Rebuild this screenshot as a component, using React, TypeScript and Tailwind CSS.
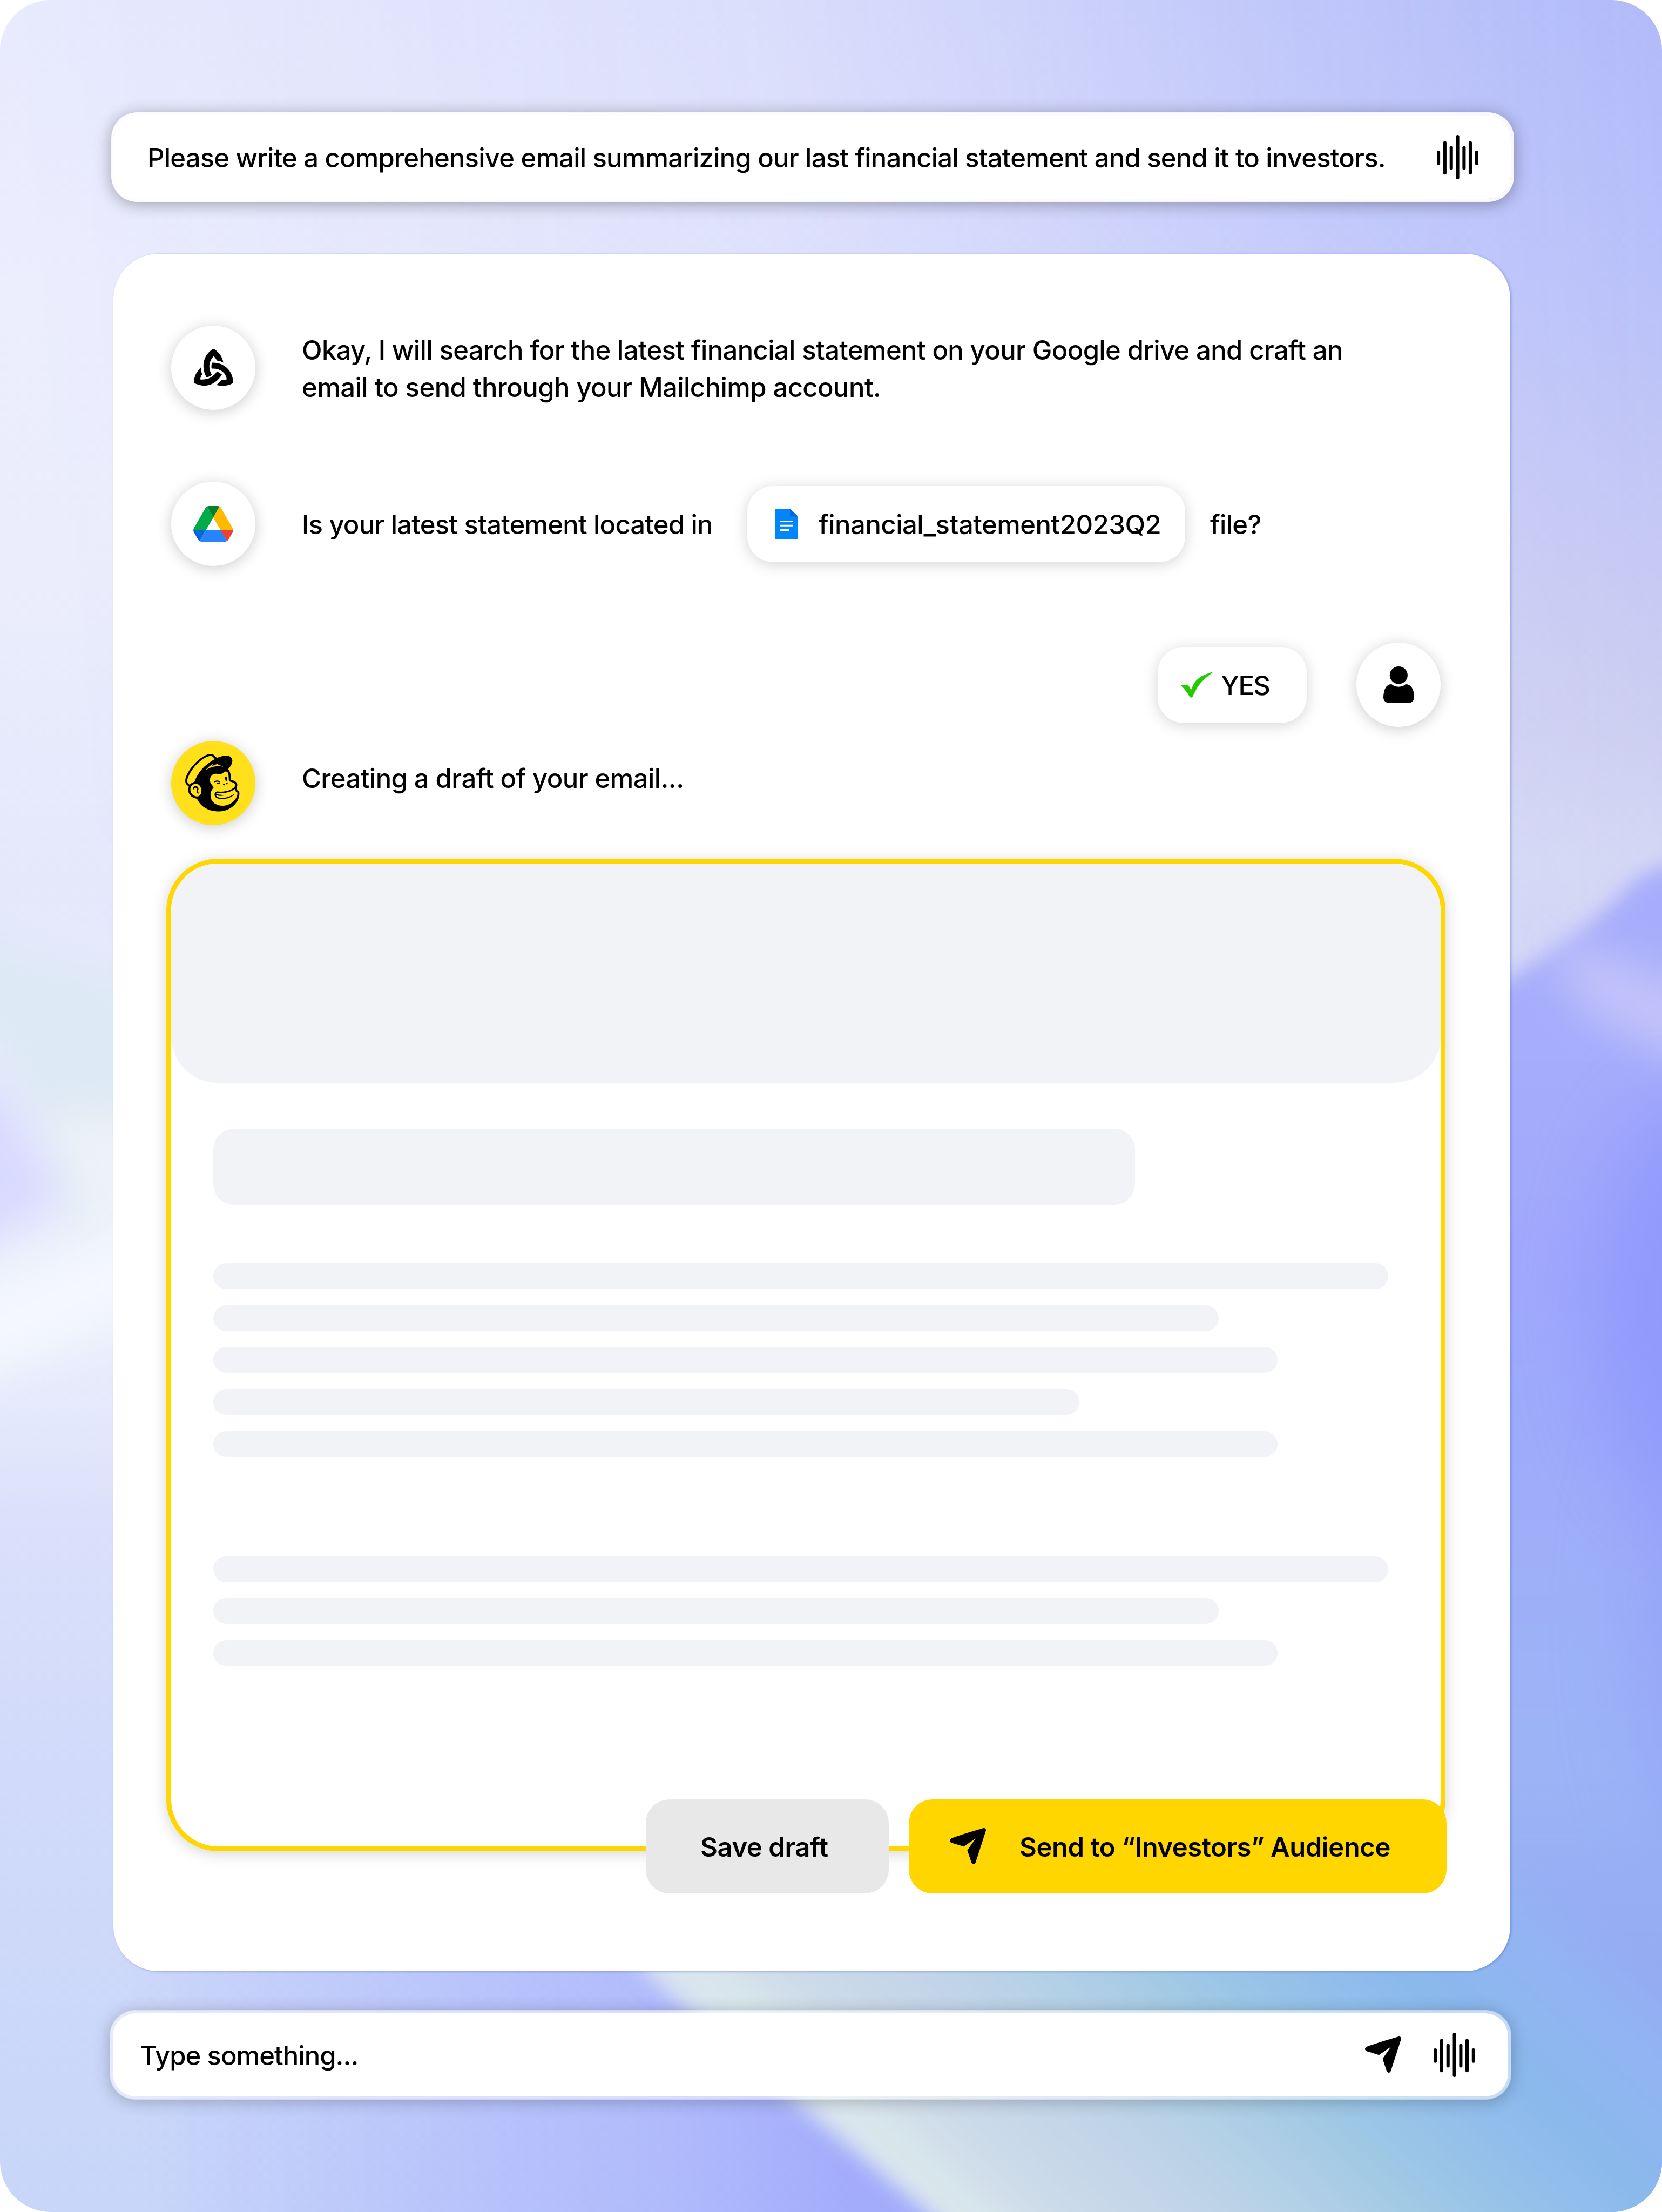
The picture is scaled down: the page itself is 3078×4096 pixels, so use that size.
import type { ReactNode } from "react";
import { SiMailchimp } from "react-icons/si";

function Backdrop() {
  return (
    <svg className="absolute inset-0 h-full w-full" viewBox="0 0 1178 1568" preserveAspectRatio="none" aria-hidden="true">
      <defs>
        <linearGradient id="leftTone" x1="0" y1="0" x2="0" y2="1">
          <stop offset="0" stopColor="#e8eafd" />
          <stop offset=".13" stopColor="#ecedfd" />
          <stop offset=".26" stopColor="#ebedfc" />
          <stop offset=".4" stopColor="#e4e8fb" />
          <stop offset=".6" stopColor="#ebeffc" />
          <stop offset=".69" stopColor="#dae0fb" />
          <stop offset=".8" stopColor="#d1dafa" />
          <stop offset="1" stopColor="#c8d6f9" />
        </linearGradient>
        <linearGradient id="rightTone" x1="0" y1="0" x2="0" y2="1">
          <stop offset="0" stopColor="#b1baf8" />
          <stop offset=".12" stopColor="#b7bffa" />
          <stop offset=".25" stopColor="#c3c7f3" />
          <stop offset=".33" stopColor="#cbcdf0" />
          <stop offset=".39" stopColor="#d2d6f4" />
          <stop offset="1" stopColor="#a5b0fb" />
        </linearGradient>
        <linearGradient id="blend" x1="0" y1="0" x2="1178" y2="-90" gradientUnits="userSpaceOnUse">
          <stop offset="0" stopColor="#fff" stopOpacity="0" />
          <stop offset=".25" stopColor="#fff" stopOpacity=".12" />
          <stop offset=".45" stopColor="#fff" stopOpacity=".24" />
          <stop offset=".6" stopColor="#fff" stopOpacity=".45" />
          <stop offset=".78" stopColor="#fff" stopOpacity=".75" />
          <stop offset="1" stopColor="#fff" stopOpacity="1" />
        </linearGradient>
        <mask id="blendMask" maskUnits="userSpaceOnUse" x="0" y="0" width="1178" height="1568">
          <rect width="1178" height="1568" fill="url(#blend)" />
        </mask>
        <linearGradient id="violet" x1="0" y1="600" x2="0" y2="1568" gradientUnits="userSpaceOnUse">
          <stop offset="0" stopColor="#a9adfc" />
          <stop offset=".1" stopColor="#a8aefb" />
          <stop offset=".3" stopColor="#a0a8fc" />
          <stop offset=".42" stopColor="#9eaafa" />
          <stop offset=".52" stopColor="#9eaff8" />
          <stop offset=".7" stopColor="#9cb5f6" />
          <stop offset="1" stopColor="#8fb3f0" />
        </linearGradient>
        <linearGradient id="peri" x1="90" y1="1440" x2="590" y2="1400" gradientUnits="userSpaceOnUse">
          <stop offset="0" stopColor="#a5aefc" stopOpacity="0" />
          <stop offset=".75" stopColor="#a8b2fd" stopOpacity=".72" />
          <stop offset="1" stopColor="#a3acfb" stopOpacity="1" />
        </linearGradient>
        <linearGradient id="wedge" x1="458" y1="1397" x2="787" y2="1038.3" gradientUnits="userSpaceOnUse">
          <stop offset="0" stopColor="#d6e1f1" />
          <stop offset=".05" stopColor="#dae7ec" />
          <stop offset=".14" stopColor="#cddbe9" />
          <stop offset=".28" stopColor="#c1d4e8" />
          <stop offset=".39" stopColor="#b3d0e6" />
          <stop offset=".51" stopColor="#a0c9e4" />
          <stop offset=".64" stopColor="#93bfea" />
          <stop offset=".75" stopColor="#8ab8ec" />
          <stop offset=".9" stopColor="#92b4f3" />
          <stop offset="1" stopColor="#95aaf2" />
        </linearGradient>
        <linearGradient id="rise" x1="0" y1="1260" x2="0" y2="1395" gradientUnits="userSpaceOnUse">
          <stop offset="0" stopColor="#fff" stopOpacity="0" />
          <stop offset="1" stopColor="#fff" stopOpacity="1" />
        </linearGradient>
        <mask id="riseMask" maskUnits="userSpaceOnUse" x="0" y="0" width="1178" height="1568">
          <rect width="1178" height="1568" fill="url(#rise)" />
        </mask>
        <filter id="b6" x="-30%" y="-30%" width="160%" height="160%"><feGaussianBlur stdDeviation="7" /></filter>
        <filter id="b14" x="-80%" y="-80%" width="260%" height="260%"><feGaussianBlur stdDeviation="14" /></filter>
        <filter id="b30" x="-100%" y="-100%" width="300%" height="300%"><feGaussianBlur stdDeviation="28" /></filter>
      </defs>
      <rect width="1178" height="1568" fill="url(#leftTone)" />
      <rect width="1178" height="1568" fill="url(#rightTone)" mask="url(#blendMask)" />

      <path d="M-40 640 L0 670 L110 700 L110 880 L60 870 L0 745 L-40 700Z" fill="#dde9f5" filter="url(#b14)" />
      <path d="M30 790 L110 790 L110 890 L60 880Z" fill="#ecf2f7" filter="url(#b14)" />
      <path d="M-60 745 L0 775 L44 850 L-60 905Z" fill="#d8d9ff" filter="url(#b14)" />
      <path d="M-40 925 L110 860 L110 925 L-40 990Z" fill="#f5f8fd" opacity=".9" filter="url(#b14)" />

      <path d="M960 760 L1072 692 Q1130 658 1160 622 L1260 580 L1260 1700 L960 1700Z" fill="url(#violet)" filter="url(#b6)" />
      <path d="M1100 662 L1210 705 L1210 765 L1120 715Z" fill="#c6c6fa" opacity=".85" filter="url(#b14)" />
      <ellipse cx="1200" cy="925" rx="70" ry="150" fill="#8c95fc" opacity=".75" filter="url(#b30)" />
      <ellipse cx="1205" cy="1150" rx="45" ry="170" fill="#929dfa" opacity=".6" filter="url(#b30)" />

      <path d="M0 1330 H760 V1568 H0Z" fill="url(#peri)" />
      <g mask="url(#riseMask)">
        <path d="M300 1220 L458 1399 C500 1440 600 1520 661 1572 L720 1640 H1300 V1100 H300Z" fill="url(#wedge)" filter="url(#b6)" />
      </g>
    </svg>
  );
}

function WaveIcon() {
  const bars = [
    { x: 165, y: 334, h: 95 },
    { x: 207, y: 272, h: 219 },
    { x: 249, y: 303, h: 157 },
    { x: 291, y: 231, h: 291 },
    { x: 333, y: 303, h: 157 },
    { x: 374, y: 272, h: 219 },
    { x: 416, y: 334, h: 95 },
  ];
  return (
    <svg className="h-[82px] w-[77px]" viewBox="165 231 273 291">
      {bars.map((b) => (
        <rect key={b.x} x={b.x} y={b.y} width="21.5" height={b.h} rx="10.7" />
      ))}
    </svg>
  );
}

function SendIcon() {
  return (
    <svg className="size-[67px]" viewBox="147 225 237 237">
      <path d="M366 225.5 Q375 223 381 230 Q386 236 383 244 L317 448 Q312 462 303 462 Q293 462 288 449 L262 371 L316 293 L238 346 L158 321 Q147 316 147 306 Q147 297 160 291 Q255 257 366 225.5Z" />
    </svg>
  );
}

function KnotIcon() {
  return (
    <svg className="h-[69px] w-[73px]" viewBox="225 216 258 245">
      <path d="M347 219 Q354 214 361 219 C392 243 413 270 418 306 C405 298 390 294 375 292 C371 282 364 271 354 264 C322 300 317 347 343 386 C333 395 322 400 308 403 C272 343 282 260 347 219Z" />
      <path d="M343 307 C430 303 485 370 483 440 C450 462 410 463 372 453 C386 444 396 433 406 421 C418 421 430 420 441 416 C435 372 398 343 341 346 C339 332 340 320 343 307Z" />
      <path d="M271 338 C271 355 274 370 279 383 C272 394 268 405 266 417 C310 422 353 402 376 365 C388 370 399 376 409 385 C370 450 300 480 225 440 C224 400 242 365 271 338Z" />
    </svg>
  );
}

function DriveIcon() {
  return (
    <svg className="h-[66px] w-[74px]" viewBox="0 0 87.3 78">
      <path d="m6.6 66.85 3.85 6.65c.8 1.4 1.95 2.5 3.3 3.3l13.75-23.8h-27.5c0 1.55.4 3.1 1.2 4.5z" fill="#0066da" />
      <path d="m43.65 25-13.75-23.8c-1.35.8-2.5 1.9-3.3 3.3l-25.4 44a9.06 9.06 0 0 0 -1.2 4.5h27.5z" fill="#00ac47" />
      <path d="m73.55 76.8c1.35-.8 2.5-1.9 3.3-3.3l1.6-2.75 7.65-13.25c.8-1.4 1.2-2.95 1.2-4.5h-27.502l5.852 11.5z" fill="#ea4335" />
      <path d="m43.65 25 13.75-23.8c-1.35-.8-2.9-1.2-4.5-1.2h-18.5c-1.6 0-3.15.45-4.5 1.2z" fill="#00832d" />
      <path d="m59.8 53h-32.3l-13.75 23.8c1.35.8 2.9 1.2 4.5 1.2h50.8c1.6 0 3.15-.45 4.5-1.2z" fill="#2684fc" />
      <path d="m73.4 26.5-12.7-22c-.8-1.4-1.95-2.5-3.3-3.3l-13.75 23.8 16.15 28h27.45c0-1.55-.4-3.1-1.2-4.5z" fill="#ffba00" />
    </svg>
  );
}

function DocIcon() {
  return (
    <svg className="h-[57px] w-[43px]" viewBox="0 0 43 57">
      <path d="M4 0 H28 L43 14.5 V53 Q43 57 39 57 H4 Q0 57 0 53 V4 Q0 0 4 0Z" fill="#0086fc" />
      <path d="M28 0 L43 14.5 H28Z" fill="#0066da" />
      <path d="M10 22 H33.5 V25 H10Z M10 29.7 H33.5 V32.8 H10Z M10 37.7 H27 V41 H10Z" fill="#fff" />
    </svg>
  );
}

function CheckIcon() {
  return (
    <svg className="h-[48px] w-[60px]" viewBox="170 251 164 168" preserveAspectRatio="none">
      <path d="M170 340 C198 329 212 334 221 370 C240 310 254 280 334 251 C290 296 262 325 240 385 C236 395 233 404 230 411 Q222 424 214 412 C202 386 190 364 170 340Z" fill="#24cb00" />
    </svg>
  );
}

function UserIcon() {
  return (
    <svg className="h-[68px] w-[57px]" viewBox="1195 224 155 242" preserveAspectRatio="none">
      <ellipse cx="1272" cy="282" rx="45" ry="58" />
      <path d="M1236 341 C1254 364 1290 364 1307 341 C1335 341 1350 378 1350 426 C1350 450 1338 465 1320 465 H1225 C1207 465 1195 450 1195 426 C1197 378 1208 341 1236 341Z" />
    </svg>
  );
}

function Avatar({ children, yellow = false }: { children: ReactNode; yellow?: boolean }) {
  return (
    <div
      className={
        "flex size-[156px] shrink-0 items-center justify-center rounded-full shadow-[0_4px_28px_rgba(0,0,0,0.2)] " +
        (yellow ? "bg-[#ffe01b]" : "bg-white")
      }
    >
      {children}
    </div>
  );
}

function Lines({ widths }: { widths: string[] }) {
  return (
    <div className="flex flex-col gap-[29.7px]">
      {widths.map((w, i) => (
        <div key={i} className={"h-[48px] rounded-full bg-[#f2f3f6] " + w} />
      ))}
    </div>
  );
}

export default function App() {
  return (
    <div className="h-[4096px] w-[3078px] overflow-hidden bg-white">
      <div className="relative h-full w-full overflow-hidden rounded-[94px] font-['Inter',sans-serif] text-[49px] font-medium leading-[68.5px] text-black">
        <Backdrop />
        <div className="relative flex h-full flex-col pt-[208px]">
          <header className="ml-[206px] flex h-[166px] w-[2598px] items-center rounded-[48px] border-[6px] border-white/90 bg-white bg-clip-padding pl-[61px] pr-[60px] shadow-[0_4px_30px_rgba(0,0,0,0.32)]">
            <p className="whitespace-nowrap pt-[5px] tracking-[-0.8px]">
              Please write a comprehensive email summarizing our last financial statement and send it to investors.
            </p>
            <div className="ml-auto">
              <WaveIcon />
            </div>
          </header>

          <main className="ml-[209.5px] mt-[95.5px] flex h-[3180px] w-[2587px] flex-col rounded-[84px] bg-white pt-[133px] shadow-[2px_1px_4px_rgba(50,80,170,0.35)]">
            <section className="ml-[107.5px] flex h-[156px] items-center gap-[86px]">
              <Avatar><KnotIcon /></Avatar>
              <div className="whitespace-nowrap pt-[6px]">
                <p className="tracking-[-0.64px]">Okay, I will search for the latest financial statement on your Google drive and craft an</p>
                <p className="tracking-[-0.57px]">email to send through your Mailchimp account.</p>
              </div>
            </section>

            <section className="ml-[107.5px] mt-[133.5px] flex h-[156px] items-center whitespace-nowrap">
              <Avatar><DriveIcon /></Avatar>
              <p className="ml-[86px] w-[825px] pt-[5px] tracking-[-0.8px]">Is your latest statement located in</p>
              <div className="flex h-[141px] w-[811px] items-center rounded-[48px] bg-white pl-[51px] shadow-[0_4px_28px_rgba(0,0,0,0.17)]">
                <DocIcon />
                <span className="ml-[38px] pt-[5px] tracking-[-0.5px]">financial_statement2023Q2</span>
              </div>
              <p className="ml-[46px] pt-[5px] tracking-[-0.7px]">file?</p>
            </section>

            <section className="mr-[128.5px] mt-[142px] flex h-[156px] items-center justify-end gap-[92px]">
              <div className="flex h-[141px] w-[276px] items-center rounded-[48px] bg-white pl-[43px] shadow-[0_4px_28px_rgba(0,0,0,0.17)]">
                <CheckIcon />
                <span className="ml-[14px] pt-[5px] tracking-[-1.7px]">YES</span>
              </div>
              <Avatar><UserIcon /></Avatar>
            </section>

            <section className="ml-[107.5px] mt-[25.5px] flex h-[156px] items-center gap-[86px]">
              <Avatar yellow><SiMailchimp className="mr-[4px] size-[106.5px]" /></Avatar>
              <p className="whitespace-nowrap pb-[14px] tracking-[-0.57px]">Creating a draft of your email...</p>
            </section>

            <section className="ml-[98.5px] mt-[62.5px] h-[1838px] w-[2369px] shrink-0 rounded-[96px] border-[9px] border-[#ffd600] bg-white shadow-[0_4px_28px_rgba(0,0,0,0.17)]">
              <div className="h-[406px] rounded-[86px] bg-[#f2f3f6]" />
              <div className="pl-[77.5px] pt-[85px]">
                <div className="mb-[108px] h-[141px] w-[1707px] rounded-[38px] bg-[#f2f3f6]" />
                <Lines widths={["w-[2176px]", "w-[1862px]", "w-[1971px]", "w-[1604px]", "w-[1971px]"]} />
                <div className="h-[184px]" />
                <Lines widths={["w-[2176px]", "w-[1862px]", "w-[1971px]"]} />
              </div>
            </section>

            <div className="relative mr-[118px] mt-[-96.5px] flex justify-end gap-[37px] whitespace-nowrap font-semibold">
              <button className="flex h-[174.5px] w-[450px] items-center rounded-[44px] bg-[#e8e8e8] pl-[101px]">
                <span className="pt-[4px] tracking-[-0.4px]">Save draft</span>
              </button>
              <button className="flex h-[174.5px] w-[995.5px] items-center rounded-[44px] bg-[#ffd600] pl-[76px]">
                <SendIcon />
                <span className="ml-[62px] pt-[4px] tracking-[-0.45px]">Send to “Investors” Audience</span>
              </button>
            </div>
          </main>

          <footer className="ml-[203px] mt-[72px] flex h-[166px] w-[2596px] items-center rounded-[48px] border-[6px] border-white/50 bg-white bg-clip-padding pl-[50px] pr-[61px] shadow-[0_4px_30px_rgba(0,0,0,0.24)]">
            <p className="pt-[5px] tracking-[-0.95px]">Type something...</p>
            <div className="ml-auto flex items-center gap-[60px]">
              <SendIcon />
              <WaveIcon />
            </div>
          </footer>
        </div>
      </div>
    </div>
  );
}
